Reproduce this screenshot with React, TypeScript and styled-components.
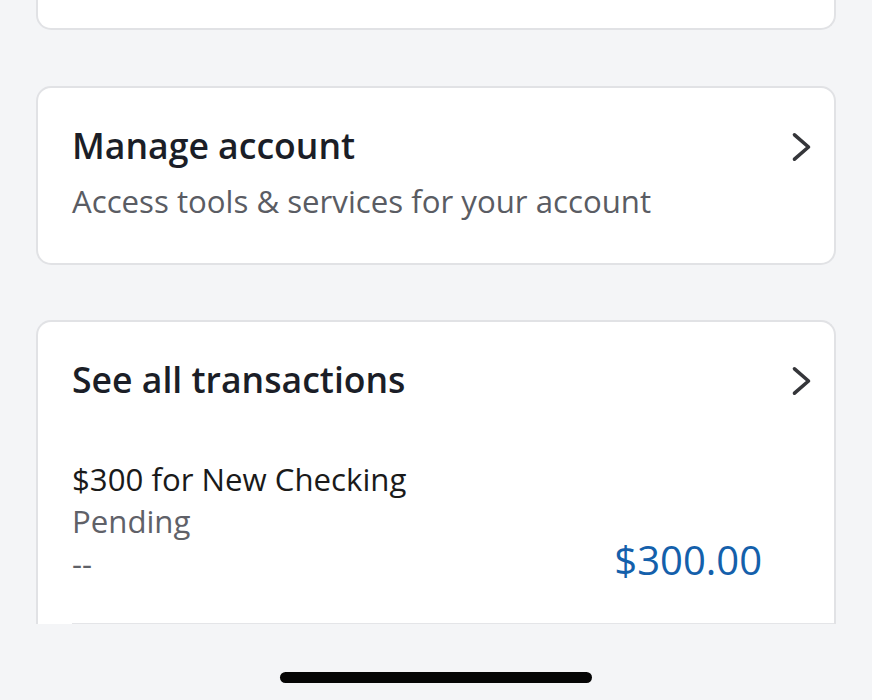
import React from "react";
import styled, { createGlobalStyle } from "styled-components";

const GlobalStyle = createGlobalStyle`
  html, body {
    margin: 0;
    padding: 0;
    background: #f4f5f7;
  }
  body {
    font-family: "Open Sans", "Noto Sans", sans-serif;
    -webkit-font-smoothing: antialiased;
  }
`;

const Screen = styled.div`
  width: 872px;
  height: 700px;
  display: flex;
  flex-direction: column;
  overflow: hidden;
  background: #f4f5f7;
`;

const Scroll = styled.main`
  height: 624px;
  flex-shrink: 0;
  overflow: hidden;
  display: flex;
  flex-direction: column;
  gap: 55px;
  padding: 0 36px;
`;

const Card = styled.section<{ $cut?: "top" | "bottom" }>`
  flex-shrink: 0;
  background: #fff;
  border: 2px solid #e1e2e5;
  border-radius: 15px;
  ${(p) =>
    p.$cut === "top" &&
    `border-top: none; border-top-left-radius: 0; border-top-right-radius: 0;`}
  ${(p) =>
    p.$cut === "bottom" &&
    `border-bottom: none; border-bottom-left-radius: 0; border-bottom-right-radius: 0; flex: 1 0 auto;`}
`;

const CardTail = styled(Card)`
  height: 28px;
  margin-bottom: 1px;
`;

const LinkRow = styled.div`
  display: flex;
  align-items: flex-start;
  justify-content: space-between;
  padding: 35px 21px 0 34px;
`;

const Title = styled.h2`
  margin: 0;
  font-size: 35.6px;
  line-height: 44px;
  font-weight: 600;
  color: #1b1e27;
`;

const Subtitle = styled.p`
  margin: 13px 0 0;
  font-size: 31.2px;
  line-height: 42px;
  color: #5a5c63;
`;

const ManageBody = styled(LinkRow)`
  padding-bottom: 41px;
`;

const ChevronBox = styled.span`
  display: flex;
  margin-top: 8px;
`;

const TxList = styled.div`
  padding-left: 34px;
  margin-top: 57px;
`;

const TxItem = styled.div`
  display: flex;
  align-items: last baseline;
  justify-content: space-between;
  padding: 0 72px 39px 0;
  border-bottom: 2px solid #e4e5e8;
`;

const TxName = styled.div`
  font-size: 31.2px;
  line-height: 42px;
  color: #1a1a1a;
`;

const TxMeta = styled.div`
  font-size: 31.2px;
  line-height: 42px;
  color: #5f6168;
`;

const Amount = styled.div`
  font-size: 40px;
  line-height: 48px;
  color: #1460ab;
`;

const HomeArea = styled.div`
  flex: 1;
  display: flex;
  align-items: flex-end;
  justify-content: center;
  padding-bottom: 17px;
`;

const HomeBar = styled.div`
  width: 312px;
  height: 11px;
  border-radius: 6px;
  background: #050505;
`;

const Chevron = () => (
  <ChevronBox>
    <svg width="24" height="32" viewBox="0 0 24 32" fill="none">
      <path
        d="M5.5 3.8 L19.5 16 L5.5 28.2"
        stroke="#35363a"
        strokeWidth="3.6"
        strokeLinecap="round"
        strokeLinejoin="round"
      />
    </svg>
  </ChevronBox>
);

export default function App() {
  return (
    <Screen>
      <GlobalStyle />
      <Scroll>
        <CardTail $cut="top" />
        <Card>
          <ManageBody>
            <div>
              <Title>Manage account</Title>
              <Subtitle>Access tools &amp; services for your account</Subtitle>
            </div>
            <Chevron />
          </ManageBody>
        </Card>
        <Card $cut="bottom">
          <LinkRow>
            <Title>See all transactions</Title>
            <Chevron />
          </LinkRow>
          <TxList>
            <TxItem>
              <div>
                <TxName>$300 for New Checking</TxName>
                <TxMeta>Pending</TxMeta>
                <TxMeta>--</TxMeta>
              </div>
              <Amount>$300.00</Amount>
            </TxItem>
          </TxList>
        </Card>
      </Scroll>
      <HomeArea>
        <HomeBar />
      </HomeArea>
    </Screen>
  );
}
